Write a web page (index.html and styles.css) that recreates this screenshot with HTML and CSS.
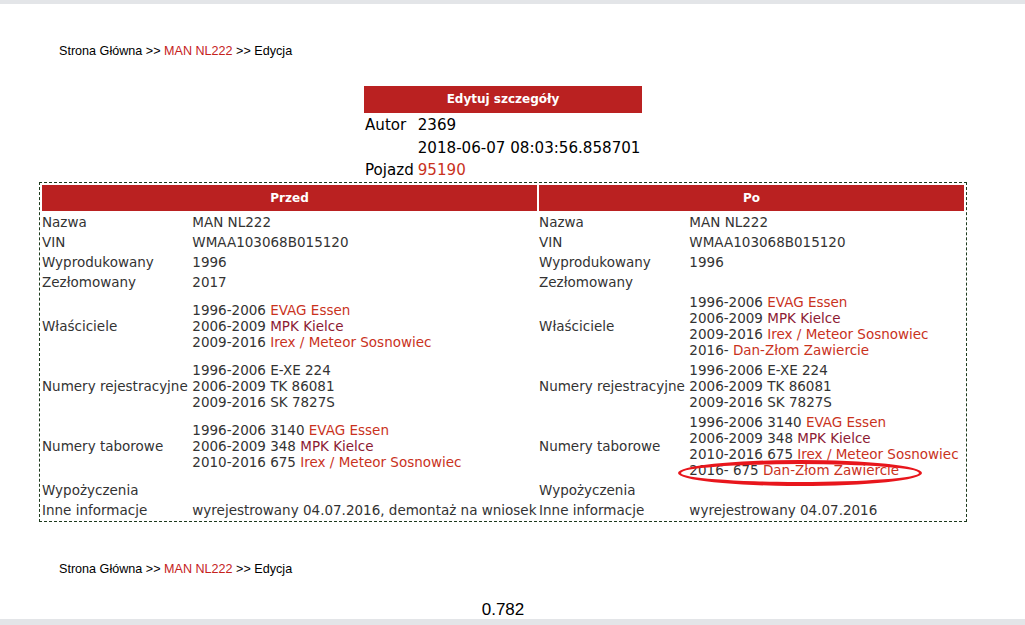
FILE: index.html
```html
<!DOCTYPE html>
<html lang="pl">
<head>
    <meta charset="UTF-8">
    <title>Edycja - MAN NL222</title>
    <link rel="stylesheet" href="styles.css">
</head>
<body>
    <div class="page">
        <div class="crumbs">
            Strona Główna &gt;&gt; <a href="#">MAN NL222</a> &gt;&gt; Edycja
        </div>

        <div class="details">
            <div class="details-head">Edytuj szczegóły</div>
            <table class="meta">
                <tr><td>Autor</td><td>2369</td></tr>
                <tr><td></td><td>2018-06-07 08:03:56.858701</td></tr>
                <tr><td>Pojazd</td><td><a href="#" class="bright">95190</a></td></tr>
            </table>
        </div>

        <table class="diff">
            <colgroup>
                <col class="c-label">
                <col class="c-left">
                <col class="c-label">
                <col class="c-right">
            </colgroup>
            <tr>
                <th colspan="2">Przed</th>
                <th colspan="2">Po</th>
            </tr>
            <tr>
                <td>Nazwa</td><td>MAN NL222</td>
                <td>Nazwa</td><td>MAN NL222</td>
            </tr>
            <tr>
                <td>VIN</td><td>WMAA103068B015120</td>
                <td>VIN</td><td>WMAA103068B015120</td>
            </tr>
            <tr>
                <td>Wyprodukowany</td><td>1996</td>
                <td>Wyprodukowany</td><td>1996</td>
            </tr>
            <tr>
                <td>Zezłomowany</td><td>2017</td>
                <td>Zezłomowany</td><td></td>
            </tr>
            <tr>
                <td>Właściciele</td>
                <td>
                    1996-2006 <a href="#" class="bright">EVAG Essen</a><br>
                    2006-2009 <a href="#" class="dark">MPK Kielce</a><br>
                    2009-2016 <a href="#" class="bright">Irex / Meteor Sosnowiec</a>
                </td>
                <td>Właściciele</td>
                <td>
                    1996-2006 <a href="#" class="bright">EVAG Essen</a><br>
                    2006-2009 <a href="#" class="dark">MPK Kielce</a><br>
                    2009-2016 <a href="#" class="bright">Irex / Meteor Sosnowiec</a><br>
                    2016- <a href="#" class="bright">Dan-Złom Zawiercie</a>
                </td>
            </tr>
            <tr>
                <td>Numery rejestracyjne</td>
                <td>1996-2006 E-XE 224<br>2006-2009 TK 86081<br>2009-2016 SK 7827S</td>
                <td>Numery rejestracyjne</td>
                <td>1996-2006 E-XE 224<br>2006-2009 TK 86081<br>2009-2016 SK 7827S</td>
            </tr>
            <tr>
                <td>Numery taborowe</td>
                <td>
                    1996-2006 3140 <a href="#" class="bright">EVAG Essen</a><br>
                    2006-2009 348 <a href="#" class="dark">MPK Kielce</a><br>
                    2010-2016 675 <a href="#" class="bright">Irex / Meteor Sosnowiec</a>
                </td>
                <td>Numery taborowe</td>
                <td>
                    1996-2006 3140 <a href="#" class="bright">EVAG Essen</a><br>
                    2006-2009 348 <a href="#" class="dark">MPK Kielce</a><br>
                    2010-2016 675 <a href="#" class="bright">Irex / Meteor Sosnowiec</a><br>
                    <span class="marked">2016- 675 <a href="#" class="bright">Dan-Złom Zawiercie</a></span>
                </td>
            </tr>
            <tr>
                <td>Wypożyczenia</td><td></td>
                <td>Wypożyczenia</td><td></td>
            </tr>
            <tr>
                <td>Inne informacje</td><td>wyrejestrowany 04.07.2016, demontaż na wniosek</td>
                <td>Inne informacje</td><td>wyrejestrowany 04.07.2016</td>
            </tr>
        </table>

        <div class="crumbs crumbs-bottom">
            Strona Główna &gt;&gt; <a href="#">MAN NL222</a> &gt;&gt; Edycja
        </div>

        <div class="timer">0.782</div>
    </div>
</body>
</html>
```

FILE: styles.css
```css
html {
    background: #fff;
}

body {
    margin: 0;
    font-family: "DejaVu Sans", Verdana, sans-serif;
    color: #000;
    border-top: 4px solid #e3e5e8;
    min-height: 625px;
    box-sizing: border-box;
    position: relative;
}

body::after {
    content: "";
    position: absolute;
    left: 0;
    right: 0;
    bottom: 0;
    height: 6px;
    background: #e3e5e8;
}

.page {
    width: 1006px;
}

a {
    text-decoration: none;
}

.crumbs {
    padding: 40px 0 0 59px;
    font-family: "Liberation Sans", Arial, sans-serif;
    font-size: 12.6px;
    line-height: 14px;
    color: #000;
}

.crumbs a {
    color: #c5221c;
}

.crumbs-bottom {
    padding-top: 40px;
}

.details {
    width: 278px;
    margin: 28px auto 0;
}

.details-head {
    background: #ba2121;
    color: #fff;
    font-weight: bold;
    font-size: 12px;
    text-align: center;
    height: 27px;
    line-height: 27px;
}

.meta {
    border-collapse: collapse;
    font-size: 15.1px;
    margin: 1px 0 0 1px;
}

.meta td {
    padding: 0;
    height: 22.5px;
    vertical-align: middle;
    white-space: nowrap;
}

.meta td:first-child {
    padding-right: 4px;
}

.bright {
    color: #c9321d;
}

.dark {
    color: #8c1a33;
}

.diff {
    margin: 0 auto;
    border: 1px dashed #1d3a1d;
    border-spacing: 2px;
    font-size: 13.5px;
    color: #333;
    table-layout: fixed;
    width: 928px;
}

.c-label {
    width: 148px;
}

.c-left {
    width: 344px;
}

.c-right {
    width: 274px;
}

.diff th {
    background: #ba2121;
    color: #fff;
    font-size: 12px;
    font-weight: bold;
    height: 26px;
    padding: 0;
}

.diff td {
    padding: 1px 0;
    line-height: 16px;
    vertical-align: middle;
    white-space: nowrap;
}

.marked {
    position: relative;
}

.marked::after {
    content: "";
    position: absolute;
    left: -11px;
    top: -2px;
    width: 238px;
    height: 18px;
    border-style: solid;
    border-color: #e8161c;
    border-width: 4px 3px;
    border-radius: 50%;
}

.timer {
    text-align: center;
    font-family: "Liberation Sans", Arial, sans-serif;
    font-size: 17px;
    margin-top: 24px;
}
```
